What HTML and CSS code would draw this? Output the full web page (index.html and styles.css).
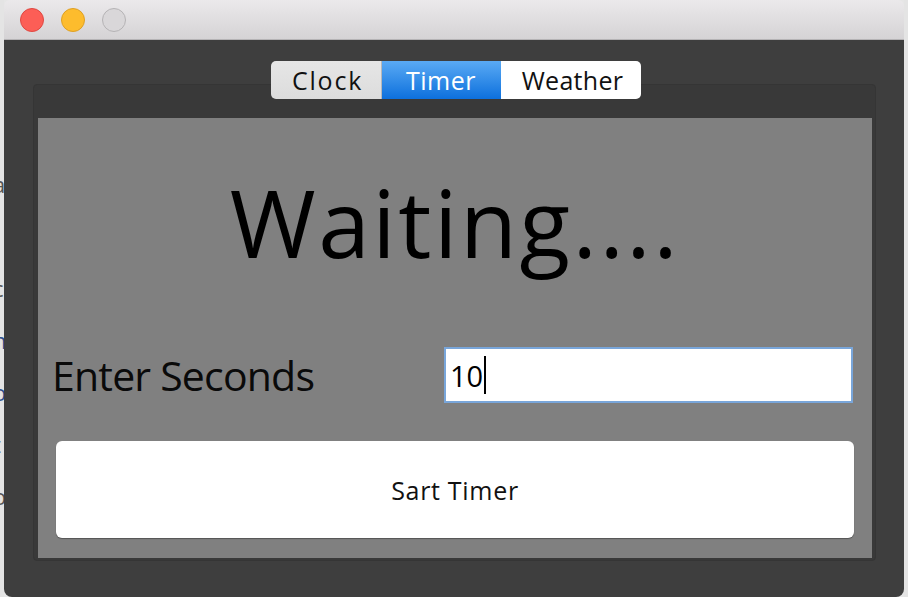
FILE: index.html
```html
<!DOCTYPE html>
<html>
<head>
<meta charset="utf-8">
<link rel="stylesheet" href="styles.css">
</head>
<body>
<div class="screen">
  <div class="behind behind-left">
    <div class="ghost">
      <span>a</span><span>&nbsp;</span><span>c</span><span class="blue">n</span><span class="blue">o</span><span>t</span><span>o</span>
    </div>
  </div>
  <div class="window">
    <div class="titlebar">
      <span class="light red"></span>
      <span class="light yellow"></span>
      <span class="light gray"></span>
    </div>
    <div class="body">
      <div class="tabs">
        <div class="tab tab-clock">Clock</div>
        <div class="tab tab-timer">Timer</div>
        <div class="tab tab-weather">Weather</div>
      </div>
      <div class="frame">
        <div class="content">
          <div class="status">Waiting....</div>
          <div class="row">
            <div class="label">Enter Seconds</div>
            <div class="field">10<span class="caret"></span></div>
          </div>
          <div class="button">Sart Timer</div>
        </div>
      </div>
    </div>
  </div>
  <div class="behind behind-right"></div>
</div>
</body>
</html>
```
FILE: styles.css
```css
html, body {
  margin: 0;
  padding: 0;
}
body {
  width: 908px;
  height: 597px;
  overflow: hidden;
  background: #e6e6e6;
  font-family: "Lucida Grande", "Open Sans", "DejaVu Sans", sans-serif;
}
.screen {
  display: flex;
  width: 908px;
  height: 597px;
}
.behind {
  width: 4px;
  flex: none;
  overflow: hidden;
  background: #e4e4e4;
}
.ghost {
  display: flex;
  flex-direction: column;
  width: 12px;
  margin-left: -7px;
  padding-top: 158px;
  font-size: 22px;
  line-height: 52px;
  color: #555;
}
.ghost .blue {
  color: #2d4f8c;
}
.window {
  width: 900px;
  flex: none;
  display: flex;
  flex-direction: column;
  border-radius: 6px 6px 8px 8px;
  overflow: hidden;
}
.titlebar {
  height: 39px;
  flex: none;
  border-bottom: 1px solid #b5b3b5;
  background: linear-gradient(#ebe9eb, #d5d3d5);
  display: flex;
  align-items: center;
  gap: 17px;
  padding-left: 16px;
}
.light {
  width: 22px;
  height: 22px;
  border-radius: 50%;
  box-sizing: content-box;
}
.red {
  background: #fc5e56;
  border: 1px solid #df4842;
}
.yellow {
  background: #fdbc2d;
  border: 1px solid #dea024;
}
.gray {
  background: #d9d7d9;
  border: 1px solid #b5b3b5;
}
.body {
  flex: 1;
  background: #3e3e3e;
  padding: 21px 28px 36px 29px;
  display: flex;
  flex-direction: column;
}
.tabs {
  display: flex;
  align-self: center;
  position: relative;
  z-index: 1;
  height: 38px;
  margin-left: 2px;
}
.tab {
  height: 38px;
  display: flex;
  align-items: center;
  justify-content: center;
  font-size: 25px;
  color: #111;
  box-sizing: border-box;
}
.tab-clock {
  width: 111px;
  background: linear-gradient(#e6e6e6, #dcdcdc);
  border-radius: 5px 0 0 5px;
  border-right: 1px solid #b8b8b8;
  letter-spacing: 1.8px;
  padding-left: 4px;
}
.tab-timer {
  width: 119px;
  background: linear-gradient(#5aaaf4, #0d70dd);
  color: #fff;
  letter-spacing: 0.5px;
}
.tab-weather {
  width: 140px;
  background: #fff;
  border-radius: 0 5px 5px 0;
  letter-spacing: 0.3px;
  padding-left: 4px;
}
.frame {
  margin-top: -15px;
  background: #393939;
  border: 1px solid #353535;
  border-radius: 4px;
  padding: 33px 3px 2px 4px;
  display: flex;
  flex-direction: column;
}
.content {
  background: #808080;
  height: 440px;
  display: flex;
  flex-direction: column;
}
.status {
  margin-top: 58px;
  height: 93px;
  font-size: 93px;
  line-height: 93px;
  letter-spacing: 2.5px;
  text-align: center;
  color: #000;
}
.row {
  margin-top: 78px;
  display: flex;
  align-items: center;
  justify-content: space-between;
  padding: 0 19px 0 14px;
  height: 56px;
}
.label {
  font-size: 41px;
  line-height: 56px;
  letter-spacing: -0.8px;
  color: #0a0a0a;
}
.field {
  width: 409px;
  height: 56px;
  box-sizing: border-box;
  background: #fff;
  border: 2px solid #79a6da;
  display: flex;
  align-items: center;
  padding-left: 4px;
  font-size: 29px;
  color: #000;
}
.caret {
  width: 2px;
  height: 38px;
  background: #000;
  margin-left: 1px;
}
.button {
  margin: 38px 18px 0 18px;
  height: 97px;
  background: #fff;
  border-radius: 6px;
  box-shadow: 0 1px 1px rgba(0, 0, 0, 0.35);
  display: flex;
  align-items: center;
  justify-content: center;
  font-size: 25px;
  letter-spacing: 0.7px;
  color: #111;
}
```
